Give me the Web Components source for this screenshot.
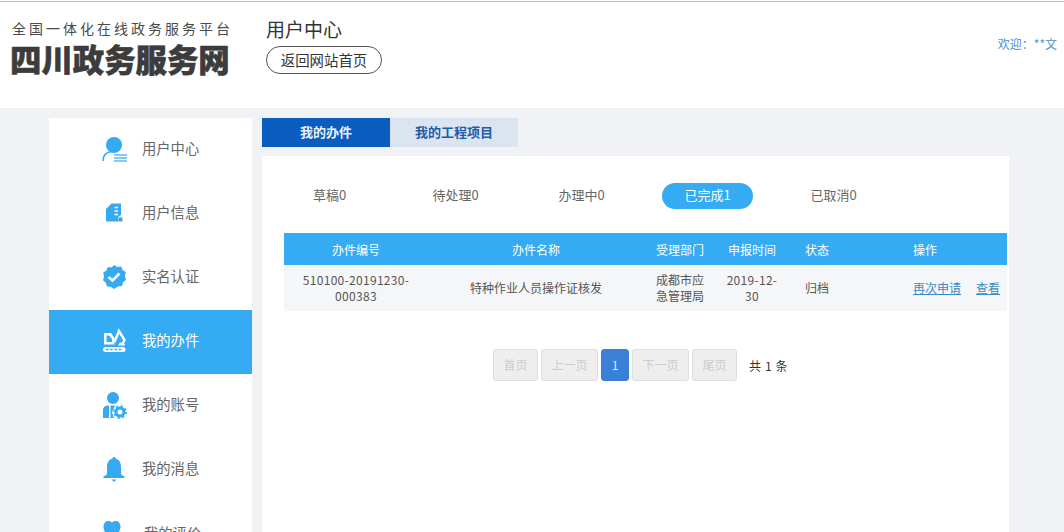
<!DOCTYPE html>
<html lang="zh"><head><meta charset="utf-8"><title>用户中心</title>
<style>
html,body{margin:0;height:532px;overflow:hidden;background:#f1f2f6;font-family:"Noto Sans CJK SC","Noto Sans",sans-serif}
svg{display:block}
.page{display:flex;align-items:flex-start;gap:10px;padding:10px 0 0 49px;height:414px;overflow:hidden}
</style></head><body>
<site-header></site-header>
<div class="page">
<side-nav>
<side-item label="用户中心"><svg slot="icon" width="28" height="28" viewBox="0 0 28 28"><circle cx="14" cy="10" r="8" fill="#35a9f2"/><path d="M3 26c0-6 3-9 9-9.500" fill="none" stroke="#35a9f2" stroke-width="1.500"/><path d="M14 20h13M14 23h13M14 26h13" stroke="#35a9f2" stroke-width="1.300" opacity=".8"/></svg></side-item>
<side-item label="用户信息"><svg slot="icon" width="28" height="28" viewBox="0 0 28 28"><path d="M11.500 4.500H21v11.500a4 4 0 0 0-2 6.500H6V10z" fill="#35a9f2"/><path d="M14.500 8.500h3.500M14.500 12h3.500M14.500 15.500h3.500" stroke="#fff" stroke-width="1.500"/><circle cx="20.500" cy="20.500" r="2.200" fill="#5b9bd5"/></svg></side-item>
<side-item label="实名认证"><svg slot="icon" width="28" height="28" viewBox="0 0 28 28"><path d="M14 2l3.300 2 3.800-.4 1.500 3.500 3.200 2-.9 3.900 1.100 3.700-2.900 2.500-1 3.700-3.900.3L14 26l-3.200-2.300-3.900-.3-1-3.700L3 17.200l1.100-3.700L3.200 9.600l3.200-2 1.500-3.500 3.800.4z" fill="#35a9f2"/><path d="M8.500 14l4 3.500 7-7" fill="none" stroke="#fff" stroke-width="2.600"/></svg></side-item>
<side-item label="我的办件" active><svg slot="icon" width="28" height="28" viewBox="0 0 28 28"><path d="M4 6h7l3.500 5v6.500H4zM6.500 8.500v6.500h5.500v-3l-3-3.500z" fill="#fff" fill-rule="evenodd"/><path d="M14.500 15l4.500-11 5.500 9-1.500 3" fill="none" stroke="#fff" stroke-width="2.400"/><path d="M20 15.500c3 0 5 1 5 3h-7z" fill="#fff"/><rect x="3" y="20" width="22.500" height="5" rx="2.500" fill="#fff"/><path d="M6 22.500h17" stroke="#35a9f2" stroke-width="1.500" stroke-dasharray="2.500 1.700"/></svg></side-item>
<side-item label="我的账号"><svg slot="icon" width="28" height="28" viewBox="0 0 28 28"><circle cx="13" cy="7" r="6" fill="#35a9f2"/><path d="M3 27v-8c0-3 2-4.500 5-4.500h1V27H5z" fill="#35a9f2"/><path d="M10.500 14.500H15l-1 2.500-2 4.500 2 5.500h-3.500z" fill="#35a9f2"/><circle cx="20" cy="21" r="4" fill="none" stroke="#35a9f2" stroke-width="3"/><circle cx="20" cy="21" r="6" fill="none" stroke="#35a9f2" stroke-width="1.600" stroke-dasharray="2.200 2.500"/></svg></side-item>
<side-item label="我的消息"><svg slot="icon" width="28" height="28" viewBox="0 0 28 28"><path d="M14 2c1 0 1.500.6 1.500 1.500 4 1 5.500 4.500 5.500 8.500v6c0 2 1.500 2.500 3.500 3.500V23h-21v-1.500c2-1 3.500-1.500 3.500-3.500v-6c0-4 1.500-7.500 5.500-8.500C12.500 2.600 13 2 14 2z" fill="#35a9f2"/><path d="M11.500 24.500h5L14 27z" fill="#35a9f2"/></svg></side-item>
<side-item label="我的评价" shift><svg slot="icon" width="28" height="28" viewBox="0 0 28 28"><path d="M12 20C5 14 3.500 10 3.500 6.500 3.500 3 6 1 8.500 1c1.500 0 2.800.6 3.500 2 .7-1.400 2-2 3.500-2 2.500 0 5 2 5 5.500 0 3.500-2 7.500-8.500 13.500z" fill="#35a9f2"/></svg></side-item>
</side-nav>
<main-panel></main-panel>
</div>
<script>
function def(name,html,init){customElements.define(name,class extends HTMLElement{constructor(){super();this.attachShadow({mode:"open"}).innerHTML=html;}connectedCallback(){init&&init(this)}})}
def("site-header",`<style>
:host{display:flex;height:106px;background:linear-gradient(#fff 1px,#bdbdbd 1px,#bdbdbd 2px,#fff 2px);padding-top:2px;box-sizing:content-box}
.logo{margin:17px 0 0 12px;width:254px;color:#3c3c3c}
.sub{font-size:14px;line-height:18px;letter-spacing:3px;white-space:nowrap;color:#4a4a4a}
.big{font-size:31.400px;line-height:38px;font-weight:900;margin:3px 0 0 -2px;white-space:nowrap;-webkit-text-stroke:.6px #3c3c3c}
.mid{padding-top:15px}
.title{font-size:19px;line-height:24px;color:#333}
a{display:block;box-sizing:border-box;width:116px;height:28px;margin-top:5px;border:1px solid #555;border-radius:14px;font-size:14.400px;line-height:25px;text-align:center;color:#333}
.who{margin-left:auto;padding:33px 7px 0 0;font-size:12px;line-height:18px;color:#4a93c8}
</style><div class="logo"><div class="sub">全国一体化在线政务服务平台</div><div class="big">四川政务服务网</div></div>
<div class="mid"><div class="title">用户中心</div><a>返回网站首页</a></div><div class="who">欢迎：**文</div>`);
def("side-nav",`<style>:host{display:block;width:203px;background:#fff;flex:none}</style><slot></slot>`);
def("side-item",`<style>
:host{display:flex;align-items:center;height:64px;padding-left:51px;gap:14px;font-size:14.300px;color:#666;padding-bottom:6px;box-sizing:border-box}
:host([active]){background:#35abf3;color:#fff}
:host([shift]){gap:16px;padding-bottom:4px}
.i{width:28px;height:28px;flex:none;margin-top:4px}
</style><div class="i"><slot name="icon"></slot></div><span></span>`,e=>{e.shadowRoot.querySelector("span").textContent=e.getAttribute("label")});
def("top-tabs",`<style>
:host{display:flex;height:29px;font-size:13px;font-weight:700}
div{width:128px;text-align:center;line-height:28px}
.a{background:#0a5cbf;color:#e8f2ff}.b{background:#dbe5f2;color:#1b5da8}
</style><div class="a">我的办件</div><div class="b">我的工程项目</div>`);
def("status-tabs",`<style>
:host{display:flex;gap:35px;font-size:13px;color:#666}
div{width:91px;height:26px;line-height:24px;text-align:center;border-radius:13px}
.on{background:#35abf3;color:#fff}
</style><div>草稿0</div><div>待处理0</div><div>办理中0</div><div class="on">已完成1</div><div>已取消0</div>`);
def("job-table",`<style>
:host{display:block;width:723px;font-size:12px;color:#555}
.r{display:grid;grid-template-columns:144px 216px 72px 72px 125px 1fr;align-items:center;text-align:center}
.h{height:32px;background:#35abf3;color:#fff}
.d{height:46px;background:#f5f6f7;line-height:16px}
.l{text-align:left;white-space:nowrap}.s{text-align:left;padding-left:17px}
a{color:#3b8cc6;text-decoration:underline;margin-right:15px}
</style><div class="r h"><div>办件编号</div><div>办件名称</div><div>受理部门</div><div>申报时间</div><div class="s">状态</div><div class="l">操作</div></div>
<div class="r d"><div style="letter-spacing:.3px">510100-20191230-<br>000383</div><div>特种作业人员操作证核发</div><div>成都市应<br>急管理局</div><div style="letter-spacing:.3px">2019-12-<br>30</div><div class="s">归档</div><div class="l"><a>再次申请</a><a>查看</a></div></div>`);
def("page-bar",`<style>
:host{display:flex;gap:3px;font-size:12px;align-items:center;margin:38px 0 0 209px}
b{font-weight:400;box-sizing:border-box;height:32px;line-height:30px;text-align:center;background:#eeeeef;border:1px solid #dddddd;border-radius:3px;color:#ccc}
.n{width:28px;background:#3a80d6;border-color:#3a80d6;color:#dce9fa}
span{margin-left:9px;color:#333;letter-spacing:.6px}
</style><b style="width:45px">首页</b><b style="width:57px">上一页</b><b class="n">1</b><b style="width:57px">下一页</b><b style="width:45px">尾页</b><span>共 1 条</span>`);
def("main-panel",`<style>
:host{display:block;width:747px;flex:none}
.p{background:#fff;height:376px;margin-top:9px;padding:27px 0 0 22px;box-sizing:border-box}
job-table{margin-top:24px}
</style><top-tabs></top-tabs><div class="p"><status-tabs></status-tabs><job-table></job-table><page-bar></page-bar></div>`);
</script>
</body></html>
